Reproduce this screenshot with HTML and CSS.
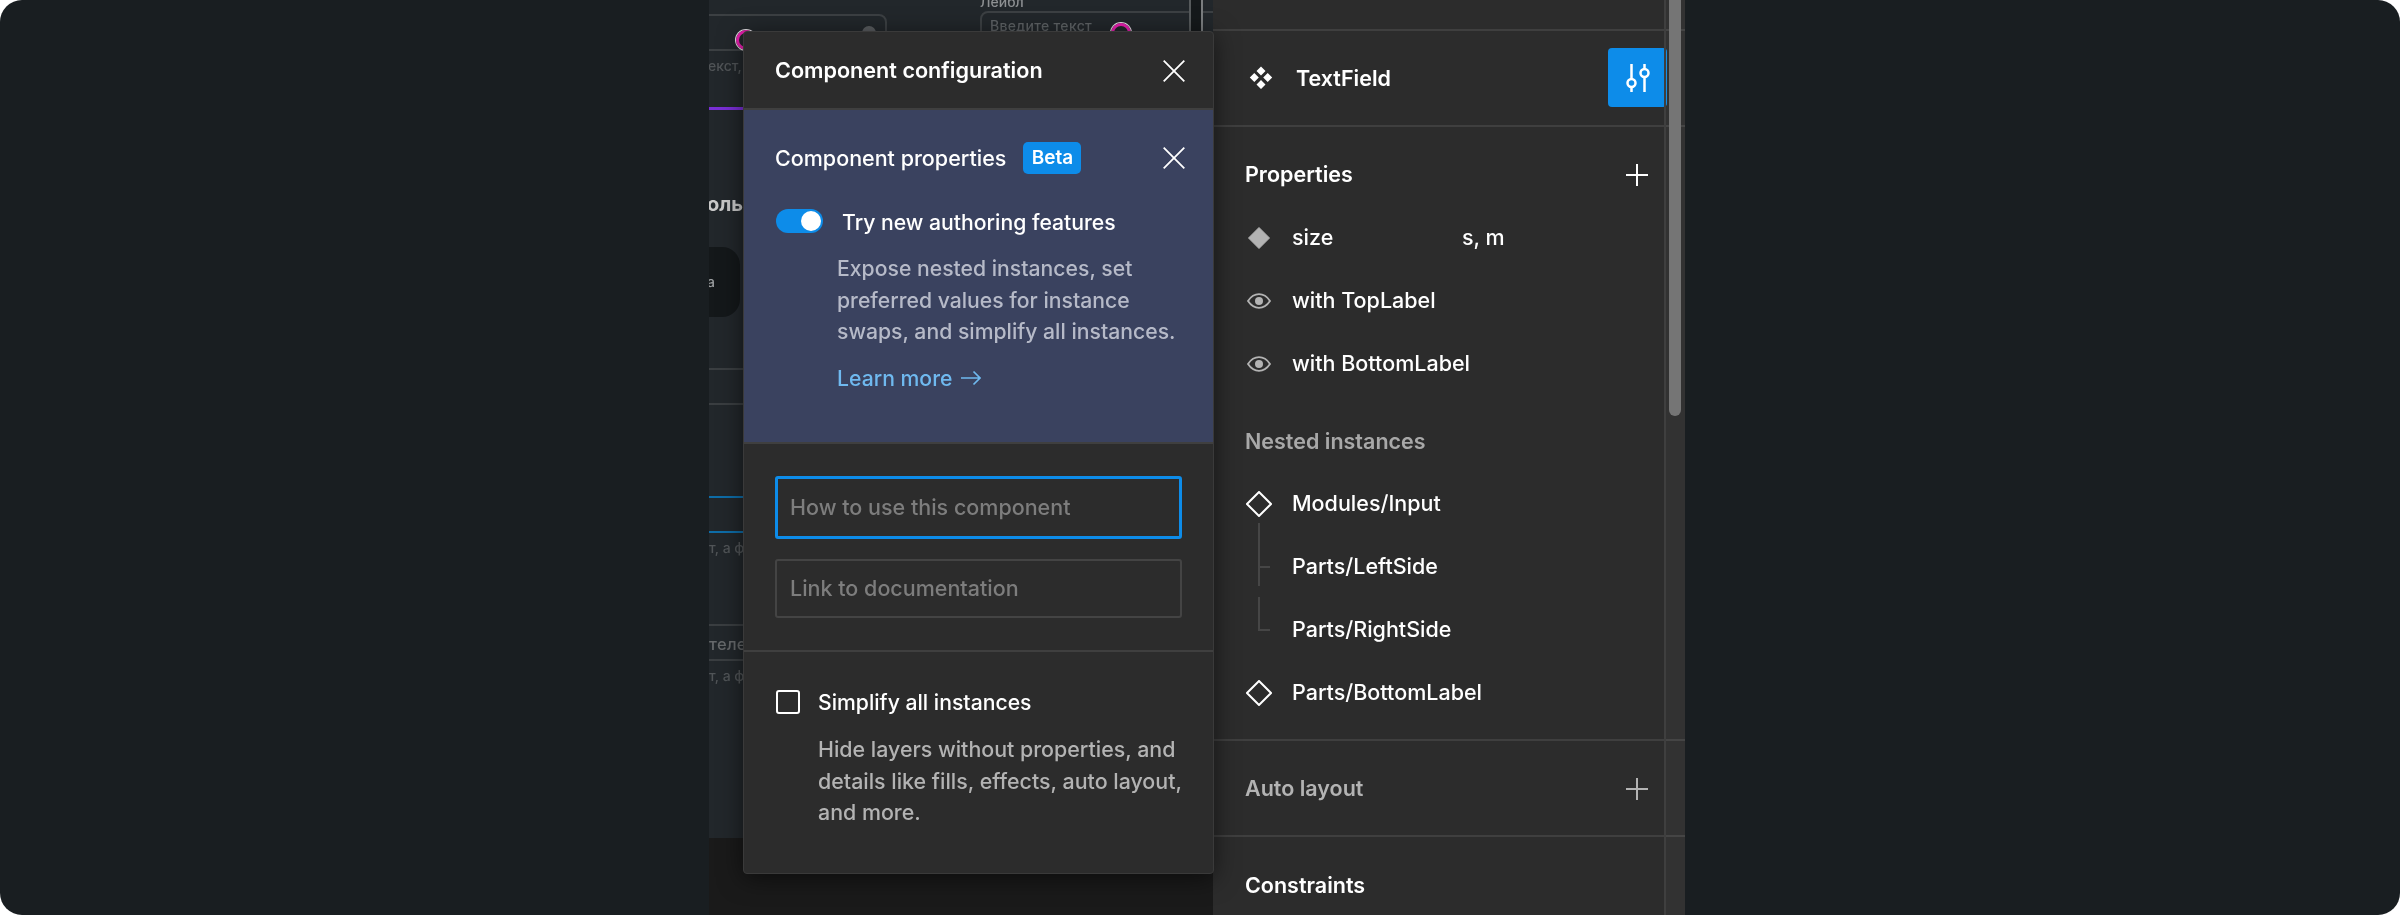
FILE: index.html
```html
<!DOCTYPE html>
<html lang="en">
<head>
<meta charset="utf-8">
<title>Component configuration</title>
<link rel="stylesheet" href="styles.css">
</head>
<body>
<div class="frame">
  <div class="stage">
    <div class="canvas">
      <div class="artboard">
        <div class="cv-field cv-field-a"></div>
        <div class="cv-ring cv-ring-a"></div>
        <div class="cv-dot"></div>
        <div class="cv-hint cv-hint-a">екст, а</div>
        <div class="cv-line cv-purple"></div>
        <div class="cv-heading">оль</div>
        <div class="cv-pill"><span>а</span></div>
        <div class="cv-line cv-l1"></div>
        <div class="cv-line cv-l2"></div>
        <div class="cv-line cv-blue cv-b1"></div>
        <div class="cv-line cv-blue cv-b2"></div>
        <div class="cv-hint cv-hint-b">т, а фо</div>
        <div class="cv-line cv-l3"></div>
        <div class="cv-hint cv-hint-c">телеф</div>
        <div class="cv-line cv-l4"></div>
        <div class="cv-hint cv-hint-d">т, а фо</div>
        <div class="cv-hint cv-label">Лейбл</div>
        <div class="cv-field cv-field-b"></div>
        <div class="cv-hint cv-placeholder">Введите текст</div>
        <div class="cv-ring cv-ring-b"></div>
        <div class="cv-gutter"></div>
      </div>
    </div>

    <aside class="panel">
      <div class="panel-body">
        <div class="sec-top"></div>
        <div class="sec-name">
          <svg class="ic-comp" viewBox="0 0 26 26"><path d="M13 1.500 17.500 6 13 10.500 8.500 6zM6.300 8 10.800 12.500 6.300 17 1.800 12.500zM19.700 8 24.200 12.500 19.700 17 15.200 12.500zM13 15 17.500 19.500 13 24 8.500 19.500z" fill="#fff"/></svg>
          <span class="name-text">TextField</span>
          <div class="tune-btn">
            <svg viewBox="0 0 30 30" width="30" height="30"><g fill="none" stroke="#fff" stroke-width="2.500"><path d="M8.500 1v15M8.500 24V29M21.500 1v4.500M21.500 14V29"/><circle cx="8.500" cy="20" r="4"/><circle cx="21.500" cy="10" r="4"/></g></svg>
          </div>
        </div>
        <section class="sec-props">
          <div class="sec-head">
            <span class="sec-title">Properties</span>
            <svg class="ic-plus" viewBox="0 0 22 22"><path d="M11 0v22M0 11h22" stroke="#fff" stroke-width="2"/></svg>
          </div>
          <div class="row"><span class="slot"><svg class="ic" viewBox="0 0 26 26"><path d="M13 2.500 23.500 13 13 23.500 2.500 13z" fill="#b3b3b3" stroke="#b3b3b3" stroke-linejoin="round"/></svg></span><span class="prop-name">size</span><span>s, m</span></div>
          <div class="row"><span class="slot"><svg class="ic" viewBox="0 0 26 26"><path d="M2 13c3-4.500 6.500-6.800 11-6.800S21 8.500 24 13c-3 4.500-6.500 6.800-11 6.800S5 17.500 2 13z" fill="none" stroke="#b3b3b3" stroke-width="1.800"/><circle cx="13" cy="13" r="4" fill="#b3b3b3"/></svg></span><span>with TopLabel</span></div>
          <div class="row"><span class="slot"><svg class="ic" viewBox="0 0 26 26"><path d="M2 13c3-4.500 6.500-6.800 11-6.800S21 8.500 24 13c-3 4.500-6.500 6.800-11 6.800S5 17.500 2 13z" fill="none" stroke="#b3b3b3" stroke-width="1.800"/><circle cx="13" cy="13" r="4" fill="#b3b3b3"/></svg></span><span>with BottomLabel</span></div>
          <div class="sub-head">Nested instances</div>
          <div class="row row-nested"><span class="slot"><svg class="ic" viewBox="0 0 26 26"><path d="M13 1 25 13 13 25 1 13z" fill="none" stroke="#fff" stroke-width="2"/></svg></span><span>Modules/Input</span></div>
          <div class="row row-nested"><span class="slot tree tree-mid"></span><span>Parts/LeftSide</span></div>
          <div class="row row-nested"><span class="slot tree tree-end"></span><span>Parts/RightSide</span></div>
          <div class="row row-nested"><span class="slot"><svg class="ic" viewBox="0 0 26 26"><path d="M13 1 25 13 13 25 1 13z" fill="none" stroke="#fff" stroke-width="2"/></svg></span><span>Parts/BottomLabel</span></div>
        </section>
        <section class="sec-auto">
          <span class="sec-title sec-title-dim">Auto layout</span>
          <svg class="ic-plus" viewBox="0 0 22 22"><path d="M11 0v22M0 11h22" stroke="#b3b3b3" stroke-width="2"/></svg>
        </section>
        <section class="sec-cons"><span class="sec-title">Constraints</span></section>
      </div>
      <div class="scroll-track"><div class="scroll-thumb"></div></div>
    </aside>

    <div class="modal">
      <header class="modal-head">
        <h1 class="modal-title">Component configuration</h1>
        <svg class="ic-close" viewBox="0 0 22 22"><path d="M.700.700l20.600 20.600M21.300.700.700 21.300" stroke="#fff" stroke-width="1.800"/></svg>
      </header>
      <section class="promo">
        <div class="promo-head">
          <span class="promo-title">Component properties</span>
          <span class="badge">Beta</span>
          <svg class="ic-close" viewBox="0 0 22 22"><path d="M.700.700l20.600 20.600M21.300.700.700 21.300" stroke="#fff" stroke-width="1.800"/></svg>
        </div>
        <div class="toggle-row">
          <span class="toggle"><span class="knob"></span></span>
          <span class="toggle-text">Try new authoring features</span>
        </div>
        <p class="promo-copy">Expose nested instances, set<br>preferred values for instance<br>swaps, and simplify all instances.</p>
        <a class="learn">Learn more
          <svg class="ic-arrow" viewBox="0 0 20 16"><path d="M0 8h19M12.500 1.500 19 8l-6.500 6.500" fill="none" stroke="#6fb9ef" stroke-width="1.700"/></svg>
        </a>
      </section>
      <section class="inputs">
        <div class="field field-focus">How to use this component</div>
        <div class="field">Link to documentation</div>
      </section>
      <section class="simplify">
        <div class="check-row"><span class="check"></span><span class="check-label">Simplify all instances</span></div>
        <p class="simplify-copy">Hide layers without properties, and<br>details like fills, effects, auto layout,<br>and more.</p>
      </section>
    </div>
  </div>
</div>
</body>
</html>
```
FILE: styles.css
```css
* { box-sizing: border-box; }
html, body { margin: 0; padding: 0; background: #fff; }
body { width: 2400px; height: 915px; overflow: hidden; font-family: "Inter", "Liberation Sans", sans-serif; font-weight: 450; }

.frame {
  width: 2400px; height: 915px; overflow: hidden;
  background: #191e21; border-radius: 22px;
  padding-left: 709px;
}
.stage { position: relative; display: flex; width: 976px; height: 915px; }

/* canvas behind the dialog */
.canvas { position: relative; width: 504px; height: 915px; background: #1a1a1a; overflow: hidden; }
.artboard { position: absolute; left: 0; top: 0; width: 504px; height: 838px; background: #22272b; filter: blur(.7px); overflow: hidden; }
.cv-line { position: absolute; left: 0; width: 100px; height: 2px; background: #3a3e41; }
.cv-l1 { top: 368px; } .cv-l2 { top: 403px; } .cv-l3 { top: 624px; } .cv-l4 { top: 659px; }
.cv-purple { top: 107px; width: 40px; height: 3px; background: #7a2fd6; }
.cv-blue { background: #0e6da8; }
.cv-b1 { top: 496px; } .cv-b2 { top: 531px; }
.cv-hint { position: absolute; font-size: 14px; line-height: 18px; color: #505457; white-space: nowrap; }
.cv-hint-a { left: -1px; top: 57px; }
.cv-hint-b { left: 0; top: 539px; }
.cv-hint-c { left: 0; top: 635px; color: #66696b; font-size: 16.500px; letter-spacing: .3px; }
.cv-hint-d { left: 0; top: 667px; }
.cv-label { left: 271px; top: -7px; color: #8d9092; }
.cv-placeholder { left: 281px; top: 17px; color: #5e6265; letter-spacing: .3px; }
.cv-heading { position: absolute; left: -2px; top: 190px; font-size: 20px; line-height: 28px; font-weight: 700; color: #c9c9c9; white-space: nowrap; }
.cv-pill { position: absolute; left: -40px; top: 247px; width: 71px; height: 70px; border-radius: 18px; background: #14181a; }
.cv-pill span { position: absolute; left: 38px; top: 25px; font-size: 14px; line-height: 20px; color: #9a9d9f; }
.cv-field { position: absolute; border: 2px solid #3c4043; border-radius: 8px; }
.cv-field-a { left: -20px; top: 14px; width: 198px; height: 37px; }
.cv-field-b { left: 271px; top: 11px; width: 300px; height: 50px; }
.cv-ring { position: absolute; width: 20px; height: 20px; border-radius: 50%; border: 3px solid #ea1fb0; box-shadow: 0 0 0 1px #e8e4e8; }
.cv-ring-a { left: 27px; top: 30px; }
.cv-ring-b { left: 402px; top: 23px; }
.cv-dot { position: absolute; left: 153px; top: 26px; width: 14px; height: 14px; border-radius: 50%; background: #5a5d60; }
.cv-gutter { position: absolute; left: 480px; top: 0; width: 14px; height: 32px; background: #15191b; border-left: 2px solid #565a5c; border-right: 2px solid #7a7d7f; }

/* right inspector */
.panel { width: 472px; height: 915px; display: flex; background: #2c2c2c; color: #fff; font-size: 21.500px; line-height: 30px; position: relative; filter: blur(.3px); }
.panel-body { width: 472px; flex: none; }
.sec-top { height: 31px; border-bottom: 2px solid #3f3f3f; }
.sec-name { height: 96px; border-bottom: 2px solid #3f3f3f; display: flex; align-items: center; padding-left: 35px; }
.ic-comp { width: 26px; height: 26px; }
.name-text { margin-left: 22px; font-weight: 600; }
.tune-btn { margin-left: auto; margin-right: 18px; width: 59px; height: 59px; margin-top: -1px; border-radius: 4px; background: #0d8ce9; display: flex; align-items: center; justify-content: center; }
.sec-props { height: 614px; padding: 15px 0; border-bottom: 2px solid #3f3f3f; }
.sec-head { height: 64px; display: flex; align-items: center; justify-content: space-between; padding: 2px 37px 0 32px; }
.sec-title { font-weight: 600; padding-bottom: 2px; }
.sec-title-dim { color: #b3b3b3; }
.ic-plus { width: 22px; height: 22px; }
.row { height: 63px; display: flex; align-items: center; padding-left: 32px; white-space: nowrap; }
.row > span:not(.slot) { padding-bottom: 2px; }
.slot { width: 47px; height: 26px; flex: none; position: relative; }
.ic { display: block; width: 26px; height: 26px; margin-left: 1px; }
.prop-name { width: 170px; }
.sub-head { height: 62px; margin-top: 15px; padding: 0 0 1px 32px; display: flex; align-items: center; font-weight: 600; color: #a8a8a8; }
.tree::before { content: ""; position: absolute; left: 13px; width: 2px; background: #464646; }
.tree::after { content: ""; position: absolute; left: 13px; width: 12px; height: 2px; background: #464646; }
.tree-mid::before { top: -31px; height: 63px; }
.tree-mid::after { top: 12px; }
.tree-end::before { top: -20px; height: 34px; }
.tree-end::after { top: 12px; }
.sec-auto { height: 96px; border-bottom: 2px solid #3f3f3f; display: flex; align-items: center; justify-content: space-between; padding: 2px 37px 0 32px; }
.sec-cons { padding: 33px 0 0 32px; }
.scroll-track {
  position: absolute; left: 451px; top: 0; width: 21px; height: 915px;
  background: rgba(255,255,255,.03); border-left: 2px solid #3f3f3f; padding-left: 3px;
}
.scroll-thumb { width: 12px; height: 416px; background: #757575; border-radius: 0 0 6px 6px; }

/* dialog */
.modal {
  position: absolute; left: 34px; top: 31px; width: 471px; height: 843px;
  background: #2c2c2c; color: #fff; border: 1px solid #3a3a3a; border-radius: 4px;
  box-shadow: 0 4px 24px rgba(0,0,0,.55);
  font-size: 21.500px; line-height: 32px; z-index: 3; overflow: hidden;
  filter: blur(.3px);
}
.modal-head { height: 78px; display: flex; align-items: center; justify-content: space-between; padding: 2px 28px 0 31px; border-bottom: 2px solid #3f3f3f; }
.modal-title { margin: 0; font-size: 21.600px; font-weight: 600; line-height: 32px; padding-bottom: 2px; }
.ic-close { width: 22px; height: 22px; flex: none; }
.promo { height: 332px; background: #3a425f; padding: 32px 28px 0 31px; }
.promo-head { display: flex; align-items: center; height: 32px; }
.promo-title { font-weight: 500; }
.badge { margin-left: 17px; width: 58px; height: 32px; border-radius: 5px; background: #0d8ce9; font-size: 19px; font-weight: 600; line-height: 32px; text-align: center; }
.promo-head .ic-close { margin-left: auto; }
.toggle-row { display: flex; align-items: center; margin-top: 35px; height: 24px; padding-left: 1px; }
.toggle { width: 47px; height: 24px; border-radius: 12px; background: #0d8ce9; position: relative; flex: none; }
.knob { position: absolute; right: 2px; top: 2px; width: 20px; height: 20px; border-radius: 50%; background: #fff; }
.toggle-text { margin-left: 19px; padding-top: 2px; font-size: 21.200px; }
.promo-copy { margin: 20px 0 0 62px; color: #b6bac8; font-size: 21.200px; line-height: 31.500px; white-space: nowrap; }
.learn { display: flex; align-items: center; margin: 14px 0 0 62px; color: #6fb9ef; font-size: 21.200px; }
.ic-arrow { width: 20px; height: 16px; margin-left: 9px; }
.inputs { height: 210px; border-top: 2px solid #3f3f3f; border-bottom: 2px solid #3f3f3f; padding: 32px 0 0 31px; }
.field { width: 407px; height: 59px; border: 2px solid #444; border-radius: 3px; padding: 0 0 2px 13px; display: flex; align-items: center; color: #7d7d7d; }
.field-focus { height: 63px; border: 3px solid #0d8ce9; padding-left: 12px; margin-bottom: 20px; }
.simplify { padding: 34px 0 0 32px; }
.check-row { display: flex; align-items: center; height: 32px; }
.check { width: 24px; height: 24px; border: 2px solid #fff; border-radius: 3px; margin-right: 18px; }
.check-label { font-size: 21.200px; }
.simplify-copy { margin: 16px 0 0 42px; color: #b3b3b3; font-size: 21.400px; line-height: 31.500px; white-space: nowrap; }
```
